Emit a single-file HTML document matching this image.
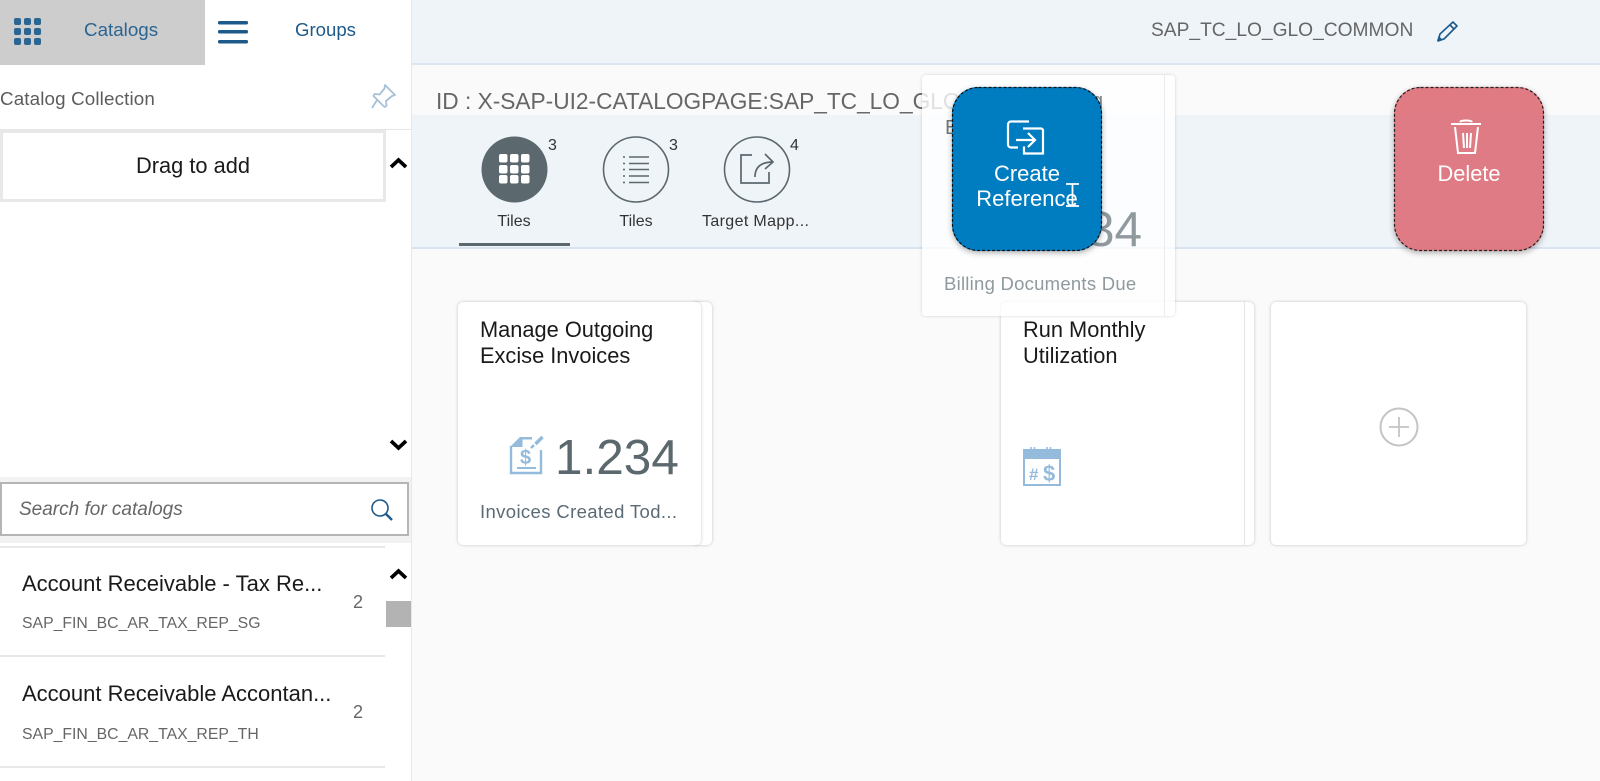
<!DOCTYPE html>
<html><head><meta charset="utf-8">
<style>
html,body{margin:0;padding:0;width:1600px;height:781px;overflow:hidden;background:#fafafa;font-family:"Liberation Sans",sans-serif}
.a{position:absolute}
.t{position:absolute;white-space:nowrap}
svg{position:absolute;left:0;top:0}
.tile{position:absolute;background:#fff;border-radius:5px;box-shadow:0 0 3px rgba(0,0,0,.22)}
</style></head><body>
<div class="a" style="left:412px;top:0;width:1188px;height:64px;background:#eff4f9"></div>
<div class="a" style="left:412px;top:63px;width:1188px;height:2px;background:#dbe6f2"></div>
<div class="a" style="left:412px;top:115px;width:1188px;height:132px;background:#eff4f9"></div>
<div class="a" style="left:412px;top:247px;width:1188px;height:2px;background:#d8e4f1"></div>

<!-- left panel -->
<div class="a" style="left:0;top:0;width:411px;height:781px;background:#fff;border-right:1px solid #e8e8e8"></div>
<div class="a" style="left:0;top:0;width:205px;height:65px;background:#cdcdcd"></div>
<div class="t" style="left:84px;top:19px;font-size:18.8px;line-height:22px;color:#2b6592">Catalogs</div>
<div class="t" style="left:295px;top:19px;font-size:18.6px;line-height:22px;color:#1d5a8a">Groups</div>
<div class="t" style="left:0;top:88px;font-size:18.8px;line-height:22px;color:#5c5c5c;letter-spacing:.14px">Catalog Collection</div>
<div class="a" style="left:0;top:129px;width:411px;height:1px;background:#e5e5e5"></div>
<div class="a" style="left:0;top:130px;width:380px;height:66px;background:#fff;border:3px solid #e8e8e8"></div>
<div class="t" style="left:0;top:153px;width:386px;text-align:center;font-size:21.8px;line-height:26px;color:#1a1a1a">Drag to add</div>
<div class="a" style="left:0;top:477px;width:411px;height:66px;background:#f2f2f2"></div>
<div class="a" style="left:0;top:482px;width:405px;height:50px;background:#fff;border:2px solid #b5b5b5"></div>
<div class="t" style="left:19px;top:499px;font-size:19px;line-height:22px;font-style:italic;color:#666">Search for catalogs</div>
<div class="a" style="left:0;top:546px;width:385px;height:2px;background:#e8e8e8"></div>
<div class="t" style="left:22px;top:571px;font-size:22px;line-height:26px;color:#1a1a1a">Account Receivable - Tax Re...</div>
<div class="t" style="left:22px;top:614px;font-size:15.8px;line-height:20px;color:#666">SAP_FIN_BC_AR_TAX_REP_SG</div>
<div class="t" style="left:353px;top:591px;font-size:18px;line-height:22px;color:#666">2</div>
<div class="a" style="left:0;top:655px;width:385px;height:2px;background:#e8e8e8"></div>
<div class="t" style="left:22px;top:681px;font-size:22px;line-height:26px;color:#1a1a1a">Account Receivable Accontan...</div>
<div class="t" style="left:22px;top:725px;font-size:15.8px;line-height:20px;color:#666">SAP_FIN_BC_AR_TAX_REP_TH</div>
<div class="t" style="left:353px;top:701px;font-size:18px;line-height:22px;color:#666">2</div>
<div class="a" style="left:0;top:766px;width:385px;height:2px;background:#e8e8e8"></div>
<div class="a" style="left:386px;top:601px;width:25px;height:26px;background:#b3b3b3"></div>

<!-- right -->
<div class="t" style="left:1151px;top:19px;font-size:19.2px;line-height:24px;color:#666">SAP_TC_LO_GLO_COMMON</div>
<div class="t" style="left:436px;top:88px;font-size:22.7px;line-height:26px;color:#666">ID : X-SAP-UI2-CATALOGPAGE:SAP_TC_LO_GLO_COMMON</div>

<div class="t" style="left:548px;top:136px;font-size:16px;line-height:20px;color:#333">3</div>
<div class="t" style="left:669px;top:136px;font-size:16px;line-height:20px;color:#333">3</div>
<div class="t" style="left:790px;top:136px;font-size:16px;line-height:20px;color:#333">4</div>
<div class="t" style="left:464px;top:212px;width:100px;text-align:center;font-size:16px;line-height:20px;color:#333">Tiles</div>
<div class="t" style="left:586px;top:212px;width:100px;text-align:center;font-size:16px;line-height:20px;color:#333">Tiles</div>
<div class="t" style="left:702px;top:212px;font-size:16px;line-height:20px;color:#333;letter-spacing:.36px">Target Mapp...</div>
<div class="a" style="left:459px;top:243px;width:111px;height:3px;background:#5b686e"></div>

<!-- tiles -->
<div class="tile" style="left:692px;top:302px;width:20px;height:243px"></div>
<div class="tile" style="left:458px;top:302px;width:243px;height:243px"></div>
<div class="t" style="left:480px;top:317px;font-size:21.8px;line-height:26px;color:#1a1a1a">Manage Outgoing<br>Excise Invoices</div>
<div class="t" style="left:555px;top:430px;font-size:49.5px;line-height:56px;color:#5b686e">1.234</div>
<div class="t" style="left:480px;top:501px;font-size:18.5px;line-height:22px;letter-spacing:.37px;color:#5b6b75">Invoices Created Tod...</div>

<div class="tile" style="left:1001px;top:302px;width:253px;height:243px"></div>
<div class="a" style="left:1244px;top:302px;width:1px;height:243px;background:#e4e4e4"></div>
<div class="t" style="left:1023px;top:317px;font-size:21.8px;line-height:26px;color:#1a1a1a">Run Monthly<br>Utilization</div>
<div class="tile" style="left:1271px;top:302px;width:255px;height:243px"></div>

<!-- ghost tile -->
<div class="a" style="left:922px;top:75px;width:253px;height:241px;background:rgba(255,255,255,.8);border-radius:4px;box-shadow:0 0 3px rgba(0,0,0,.16)"></div>
<div class="a" style="left:1164px;top:75px;width:1px;height:241px;background:#ececec"></div>
<div class="t" style="left:945px;top:115px;font-size:20px;line-height:26px;color:#777">B</div>
<div class="t" style="left:1087px;top:202px;font-size:49.5px;line-height:56px;color:#8f999e">34</div>
<div class="t" style="left:944px;top:273px;font-size:18.5px;line-height:22px;letter-spacing:.25px;color:#8f999e">Billing Documents Due</div>
<div class="t" style="left:1092px;top:88px;font-size:20px;line-height:26px;color:#888">g</div>

<!-- drop buttons -->
<div class="a" style="left:952px;top:87px;width:150px;height:164px;background:#007cc0;border-radius:26px;box-shadow:0 2px 6px rgba(0,0,0,.3)"></div>
<div class="t" style="left:952px;top:161px;width:150px;text-align:center;font-size:22px;line-height:25px;color:#fff">Create<br>Reference</div>
<div class="a" style="left:1394px;top:87px;width:150px;height:164px;background:rgba(221,112,122,.92);border-radius:26px;box-shadow:0 2px 6px rgba(0,0,0,.3)"></div>
<div class="t" style="left:1394px;top:161px;width:150px;text-align:center;font-size:21.8px;line-height:25px;color:#fff">Delete</div>

<svg width="1600" height="781" viewBox="0 0 1600 781" fill="none">
<rect x="952.500" y="87.500" width="149" height="163" rx="26" stroke="#111" stroke-width="1.200" stroke-dasharray="3 2"/>
<rect x="1394.500" y="87.500" width="149" height="163" rx="26" stroke="#222" stroke-width="1.200" stroke-dasharray="3 2"/>
<!-- catalog grid -->
<g fill="#2b6592">
<rect x="14" y="18" width="7" height="7" rx="2"/><rect x="24" y="18" width="7" height="7" rx="2"/><rect x="34" y="18" width="7" height="7" rx="2"/>
<rect x="14" y="28" width="7" height="7" rx="2"/><rect x="24" y="28" width="7" height="7" rx="2"/><rect x="34" y="28" width="7" height="7" rx="2"/>
<rect x="14" y="38" width="7" height="7" rx="2"/><rect x="24" y="38" width="7" height="7" rx="2"/><rect x="34" y="38" width="7" height="7" rx="2"/>
</g>
<!-- hamburger -->
<g fill="#1d5a8a"><rect x="218" y="21" width="30" height="3.500" rx="1.500"/><rect x="218" y="30" width="30" height="3.500" rx="1.500"/><rect x="218" y="40" width="30" height="3.500" rx="1.500"/></g>
<!-- pin -->
<path d="M385 85l10 10-3 1-6 5 .5 5-2 1-11-11 1-2 5 .5 5-6z M377 100l-5 8" stroke="#a7c0d6" stroke-width="1.800" stroke-linejoin="round"/>
<!-- chevrons -->
<g stroke="#000" stroke-width="3.600" stroke-linejoin="miter">
<path d="M391 167l7.500-7 7.500 7"/><path d="M391 441l7.500 7 7.500-7"/><path d="M391 578l7.500-7 7.500 7"/>
</g>
<!-- search -->
<circle cx="380" cy="508" r="8" stroke="#1d5a8a" stroke-width="1.600"/>
<path d="M386 514l6 6" stroke="#1d5a8a" stroke-width="2.400"/>
<!-- pencil -->
<path d="M1438 41l2-7 13-12 4 4-13 13z M1450 25l4 4" stroke="#1d5a8a" stroke-width="1.600" stroke-linejoin="round"/>
<path d="M1437 41l1.500-5 3.500 3z" fill="#1d5a8a"/>
<!-- tab icons -->
<circle cx="514.500" cy="169.500" r="33" fill="#5b686e"/>
<g fill="#fff">
<rect x="499" y="154" width="8.500" height="8.500" rx="2"/><rect x="510" y="154" width="8.500" height="8.500" rx="2"/><rect x="521" y="154" width="8.500" height="8.500" rx="2"/>
<rect x="499" y="165" width="8.500" height="8.500" rx="2"/><rect x="510" y="165" width="8.500" height="8.500" rx="2"/><rect x="521" y="165" width="8.500" height="8.500" rx="2"/>
<rect x="499" y="175" width="8.500" height="8.500" rx="2"/><rect x="510" y="175" width="8.500" height="8.500" rx="2"/><rect x="521" y="175" width="8.500" height="8.500" rx="2"/>
</g>
<circle cx="636" cy="169.500" r="32.500" stroke="#5b686e" stroke-width="1.600"/>
<path d="M629 157h20M629 163.500h20M629 169.500h20M629 176h20M629 182.500h20" stroke="#5b686e" stroke-width="1.600"/>
<path d="M623 157h2M623 163.500h2M623 169.500h2M623 176h2M623 182.500h2" stroke="#5b686e" stroke-width="1.600"/>
<circle cx="757" cy="169.500" r="32.500" stroke="#5b686e" stroke-width="1.600"/>
<path d="M752 155h-11v28h28v-11" stroke="#5b686e" stroke-width="1.700"/>
<path d="M755 177c0-10 6-15 18-15M765 154l8 8-8 7" stroke="#5b686e" stroke-width="1.700"/>
<!-- invoice icon -->
<path d="M511 446v27h30v-23" stroke="#94bbdc" stroke-width="2.400"/>
<path d="M510 447l10-10h12v2.500h-9.500v7.500z" fill="#94bbdc"/>
<path d="M517 468h19" stroke="#94bbdc" stroke-width="2"/>
<path d="M531 448l3-3" stroke="#94bbdc" stroke-width="2.500"/>
<path d="M535.500 444l7-7" stroke="#94bbdc" stroke-width="3.500"/>
<text x="520" y="464" font-family="Liberation Sans" font-weight="bold" font-size="20" fill="#94bbdc">$</text>
<!-- calendar icon -->
<rect x="1024" y="450" width="36" height="35" stroke="#94bbdc" stroke-width="2" fill="#fff"/>
<rect x="1023" y="449" width="38" height="10" fill="#94bbdc"/>
<path d="M1031 447v6M1034.500 447v6M1047 447v6M1050.500 447v6" stroke="#94bbdc" stroke-width="1.500"/>
<text x="1029" y="480" font-family="Liberation Sans" font-weight="bold" font-size="17" fill="#94bbdc">#</text>
<text x="1043" y="481" font-family="Liberation Sans" font-weight="bold" font-size="22" fill="#94bbdc">$</text>
<!-- plus -->
<circle cx="1399" cy="427" r="18.500" stroke="#c4c4c4" stroke-width="2"/>
<path d="M1389 427h20M1399 417v20" stroke="#c4c4c4" stroke-width="1.800"/>
<!-- create ref icon -->
<path d="M1029 121.500h-18a3 3 0 0 0-3 3v20a3 3 0 0 0 3 3h7" stroke="#fff" stroke-width="2.200"/>
<path d="M1023 128.500h18a2 2 0 0 1 2 2v23h-19v-7" stroke="#fff" stroke-width="2.200"/>
<path d="M1016 140h19M1028 133l7 7-7 7" stroke="#fff" stroke-width="2.200"/>
<!-- cursor -->
<path d="M1066 184h13M1072.500 184v21M1066 206h13" stroke="#fff" stroke-width="1.800"/>
<!-- trash -->
<path d="M1451 124h30M1460 122c1-2 11-2 12 0" stroke="#fff" stroke-width="2"/>
<path d="M1455 127l3 26h17l3-26M1463 133l1 15M1467 133v15M1471 133l-1 15" stroke="#fff" stroke-width="2"/>
</svg>
</body></html>
